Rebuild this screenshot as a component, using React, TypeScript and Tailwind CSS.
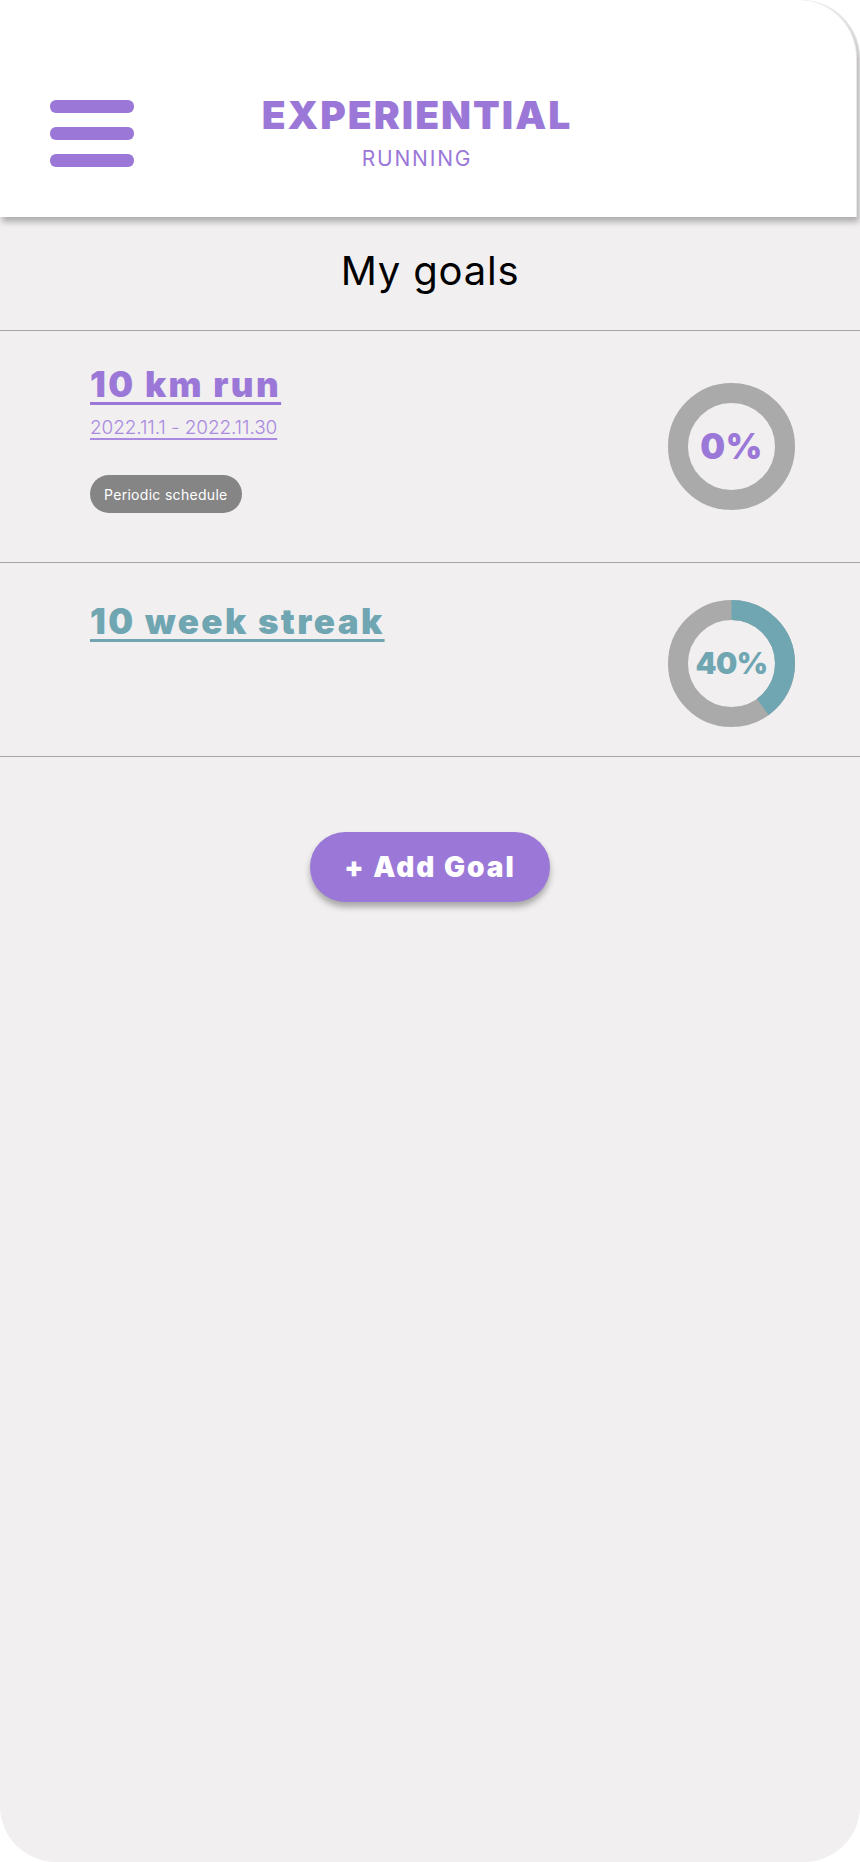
import React from 'react'

const PURPLE = '#9b78d8'
const TEAL = '#6fa6b2'

type Goal = {
  title: string
  color: string
  dates?: string
  tag?: string
  pct: number
  h: string
  pt: string
  ringMt: string
}

const GOALS: Goal[] = [
  { title: '10 km run', color: PURPLE, dates: '2022.11.1 - 2022.11.30', tag: 'Periodic schedule', pct: 0, h: 'h-[232px]', pt: 'pt-[33px]', ringMt: 'mt-0' },
  { title: '10 week streak', color: TEAL, pct: 40, h: 'h-[194px]', pt: 'pt-[38px]', ringMt: 'mt-[8px]' },
]

function Ring({ pct, color }: { pct: number; color: string }) {
  const r = 53.5
  const c = 2 * Math.PI * r
  return (
    <div className="relative w-[127px] h-[127px] shrink-0">
      <svg width="127" height="127" viewBox="0 0 127 127" className="-rotate-90">
        <circle cx="63.5" cy="63.5" r={r} fill="none" stroke="#aaaaaa" strokeWidth="20" />
        {pct > 0 && (
          <circle
            cx="63.5"
            cy="63.5"
            r={r}
            fill="none"
            stroke={color}
            strokeWidth="20"
            strokeDasharray={`${(c * pct) / 100} ${c}`}
          />
        )}
      </svg>
      <div
        className={`absolute inset-0 flex items-center justify-center font-black ${pct > 0 ? 'text-[30px] tracking-[-0.5px]' : 'text-[35px] tracking-[0.5px]'}`}
        style={{ color }}
      >
        {pct}%
      </div>
    </div>
  )
}

function GoalRow({ goal }: { goal: Goal }) {
  return (
    <div className={`flex items-center justify-between border-b border-[#a6a6a6] pl-[90px] pr-[65px] ${goal.h}`}>
      <div className={`self-start flex flex-col items-start ${goal.pt}`}>
        <div
          className="text-[35px] leading-[40px] font-black underline decoration-[3px] underline-offset-[5px] tracking-[2.4px]"
          style={{ color: goal.color }}
        >
          {goal.title}
        </div>
        {goal.dates && (
          <div className="mt-[12px] text-[19px] leading-[24px] font-light text-[#a98ae0] underline decoration-[1.5px] underline-offset-[4px] tracking-[-0.1px]">
            {goal.dates}
          </div>
        )}
        {goal.tag && (
          <div className="mt-[35px] h-[38px] px-[14px] rounded-full bg-[#858585] text-white text-[14px] tracking-[0.3px] flex items-center">
            {goal.tag}
          </div>
        )}
      </div>
      <div className={goal.ringMt}>
        <Ring pct={goal.pct} color={goal.color} />
      </div>
    </div>
  )
}

export default function App() {
  return (
    <div className="w-[860px] bg-white" style={{ fontFamily: 'Inter, "Noto Sans", sans-serif' }}>
      <div className="relative h-[1862px] bg-[#f1eff0] rounded-tr-[58px] rounded-b-[56px] overflow-hidden">
        <header className="relative z-10 w-[857px] h-[217px] bg-white rounded-tr-[58px] shadow-[2px_5px_6px_rgba(0,0,0,0.28)] border-r border-[#e8e8e8] flex items-start pt-[100px]">
          <div className="ml-[50px] w-[84px] flex flex-col gap-[14px]">
            <span className="block h-[13px] rounded-[6px] bg-[#9b78d8]" />
            <span className="block h-[13px] rounded-[6px] bg-[#9b78d8]" />
            <span className="block h-[13px] rounded-[6px] bg-[#9b78d8]" />
          </div>
          <div className="ml-[83px] w-[400px] flex flex-col items-center text-[#9b78d8]">
            <div className="text-[39px] leading-[38px] font-black tracking-[2px] -mt-[4px]">EXPERIENTIAL</div>
            <div className="mt-[13px] text-[21px] leading-[24px] tracking-[1.8px]">RUNNING</div>
          </div>
        </header>

        <main>
          <div className="h-[114px] border-b border-[#a6a6a6] flex justify-center pt-[30px]">
            <h1 className="text-[40px] leading-[48px] text-black font-normal tracking-[0.8px]">My goals</h1>
          </div>
          {GOALS.map(g => (
            <GoalRow key={g.title} goal={g} />
          ))}
          <div className="flex justify-center pt-[75px]">
            <button className="w-[240px] h-[70px] rounded-full bg-[#9b78d8] text-white text-[28px] font-black tracking-[2px] shadow-[0_5px_6px_rgba(0,0,0,0.3)]">
              + Add Goal
            </button>
          </div>
        </main>
      </div>
    </div>
  )
}
